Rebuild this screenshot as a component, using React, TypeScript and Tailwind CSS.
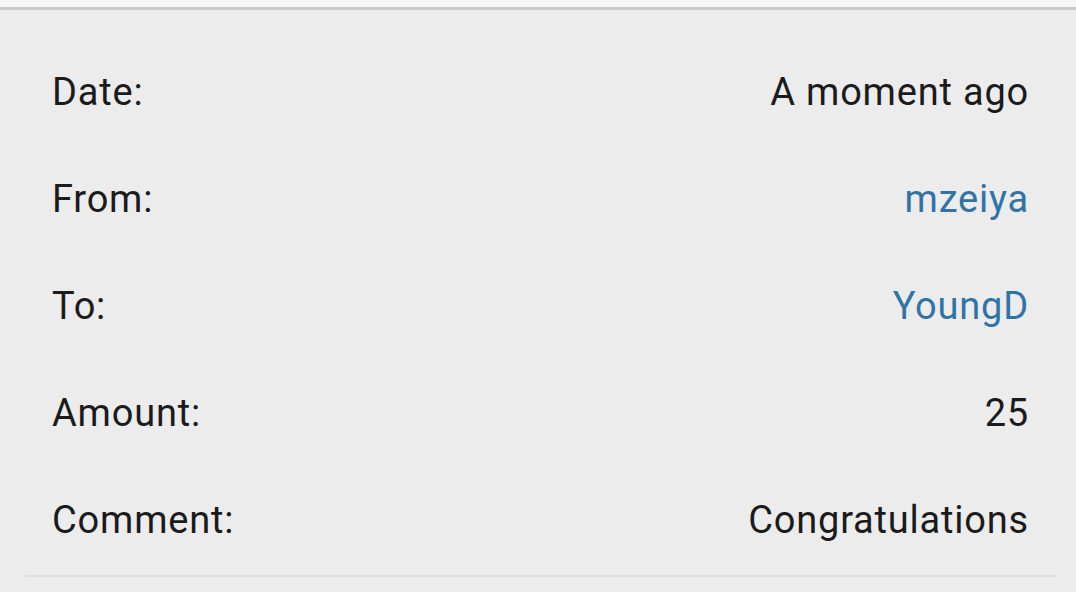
const rows = [
  { label: "Date:", value: "A moment ago", link: false },
  { label: "From:", value: "mzeiya", link: true },
  { label: "To:", value: "YoungD", link: true },
  { label: "Amount:", value: "25", link: false },
  { label: "Comment:", value: "Congratulations", link: false },
];

export default function App() {
  return (
    <div className="w-[1076px] h-[592px] overflow-hidden bg-[#ececec] font-['Roboto',sans-serif]">
      <div className="h-[7px] bg-[#f5f5f5]" />
      <div className="h-[3px] bg-[#c9c9c9]" />
      <div className="pt-[28px] pl-[48px] pr-[47px]">
        {rows.map((row) => (
          <div
            key={row.label}
            className="h-[107px] flex items-center justify-between text-[38px] tracking-[0.8px] leading-none"
          >
            <span className="text-[#1b1b1b] pl-[4px]">{row.label}</span>
            <span className={row.link ? "text-[#2f73a7]" : "text-[#1b1b1b]"}>
              {row.value}
            </span>
          </div>
        ))}
      </div>
      <div className="mt-[2px] mx-[25px] w-[1031px] h-[2px] bg-[#dedede]" />
    </div>
  );
}
